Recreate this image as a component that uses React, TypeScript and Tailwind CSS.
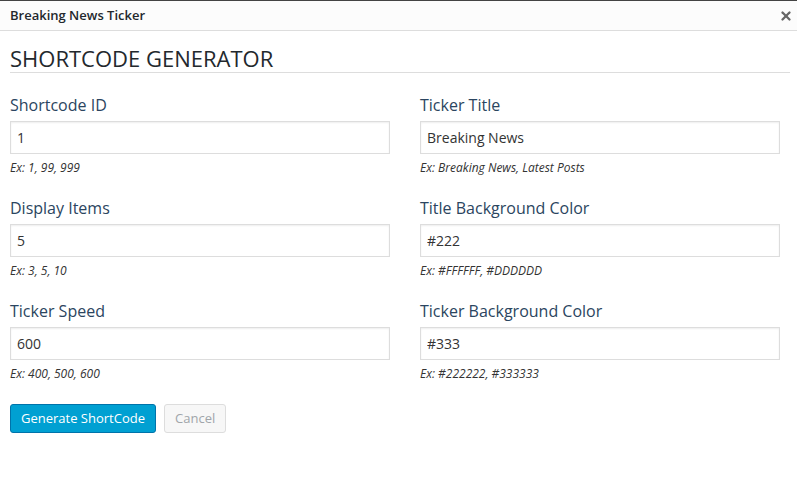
import { X } from "lucide-react";

interface Field {
	label: string;
	value: string;
	hint: string;
}

const leftFields: Field[] = [
	{ label: "Shortcode ID", value: "1", hint: "Ex: 1, 99, 999" },
	{ label: "Display Items", value: "5", hint: "Ex: 3, 5, 10" },
	{ label: "Ticker Speed", value: "600", hint: "Ex: 400, 500, 600" },
];

const rightFields: Field[] = [
	{ label: "Ticker Title", value: "Breaking News", hint: "Ex: Breaking News, Latest Posts" },
	{ label: "Title Background Color", value: "#222", hint: "Ex: #FFFFFF, #DDDDDD" },
	{ label: "Ticker Background Color", value: "#333", hint: "Ex: #222222, #333333" },
];

function FormRow({ field }: { field: Field }) {
	return (
		<div className="flex h-[103px] flex-col">
			<div className="pt-[4px] text-[16px] leading-[22px] text-[#2b4560]">{field.label}</div>
			<input
				type="text"
				defaultValue={field.value}
				className="mt-[5px] h-[33px] w-full border border-[#dddddd] bg-white px-[6px] text-[14px] text-[#333] shadow-[inset_0_1px_2px_rgba(0,0,0,0.07)] outline-none"
			/>
			<div className="mt-[6px] text-[12px] italic leading-[16px] text-[#333]">{field.hint}</div>
		</div>
	);
}

export default function App() {
	return (
		<div
			className="h-[482px] w-[797px] overflow-hidden bg-white"
			style={{ fontFamily: '"Open Sans", sans-serif' }}
		>
			<div className="flex h-[31px] items-center justify-between border-t border-b border-t-[#444] border-b-[#dddddd] bg-[#fcfcfc] pl-[10px] pr-[4px]">
				<span className="text-[13px] font-semibold text-[#23282d]">Breaking News Ticker</span>
				<X className="h-[14px] w-[14px] text-[#666]" strokeWidth={4} />
			</div>

			<div className="px-[10px]">
				<h1 className="mr-[-3px] mt-[14px] border-b border-[#dddddd] pb-0 text-[22px] leading-[27px] text-[#23282d]">
					SHORTCODE GENERATOR
				</h1>

				<div className="mt-[17px] grid grid-cols-[380px_360px] gap-x-[30px]">
					<div className="flex flex-col">
						{leftFields.map((f) => (
							<FormRow key={f.label} field={f} />
						))}
					</div>
					<div className="flex flex-col">
						{rightFields.map((f) => (
							<FormRow key={f.label} field={f} />
						))}
					</div>
				</div>

				<div className="mt-[5px] flex gap-[8px]">
					<button
						type="button"
						className="h-[29px] rounded-[3px] border border-[#0073aa] bg-[#00a0d2] px-[10px] text-[13px] text-white"
					>
						Generate ShortCode
					</button>
					<button
						type="button"
						className="h-[29px] rounded-[3px] border border-[#dddddd] bg-[#f7f7f7] px-[10px] text-[13px] text-[#a0a5aa]"
					>
						Cancel
					</button>
				</div>
			</div>
		</div>
	);
}
